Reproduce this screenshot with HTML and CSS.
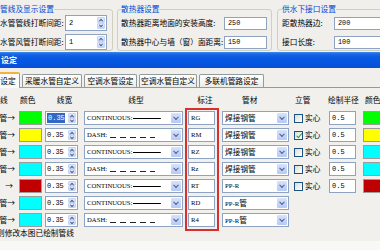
FILE: index.html
```html
<!DOCTYPE html>
<html>
<head>
<meta charset="utf-8">
<link rel="stylesheet" href="styles.css">
</head>
<body>
<div class="top">
  <fieldset class="grp g1">
    <legend>管线及显示设置</legend>
    <div class="frow"><span class="flbl w1">水管管线打断间距:</span><span class="spin big"><span class="val">2</span><span class="btns"><i class="up"></i><i class="dn"></i></span></span></div>
    <div class="frow"><span class="flbl w1">水管风管打断间距:</span><span class="spin big"><span class="val">1</span><span class="btns"><i class="up"></i><i class="dn"></i></span></span></div>
  </fieldset>
  <fieldset class="grp g2">
    <legend>散热器设置</legend>
    <div class="frow"><span class="flbl w2">散热器距离地面的安装高度:</span><span class="inp tinp">250</span></div>
    <div class="frow"><span class="flbl w2">散热器中心与墙（窗）面距离:</span><span class="inp tinp">150</span></div>
  </fieldset>
  <fieldset class="grp g3">
    <legend>供水下接口设置</legend>
    <div class="frow"><span class="flbl w3">距散热器边:</span><span class="inp tinp wide">200</span></div>
    <div class="frow"><span class="flbl w3">接口长度:</span><span class="inp tinp wide">100</span></div>
  </fieldset>
</div>
<div class="titlebar">设定</div>
<div class="dlg">
  <div class="tabs">
    <span class="tab sel">设定</span>
    <span class="tab t2">采暖水管自定义</span>
    <span class="tab t3">空调水管设定</span>
    <span class="tab t4">空调水管自定义</span>
    <span class="tab t5">多联机管路设定</span>
  </div>
  <div class="pane">
    <div class="rows">
      <div class="row hdr">
        <span class="h-lbl">线</span><span class="h-clr">颜色</span><span class="h-c">线宽</span><span class="h-c">线型</span><span class="h-c">标注</span><span class="h-mat">管材</span><span class="h-chk">立管</span><span class="h-rad">绘制半径</span><span class="h-clr2">颜色</span>
      </div>
      <div class="row">
        <span class="lbl">管→</span><span class="clr c-g"></span>
        <span class="spin"><span class="val"><b class="selt">0.35</b></span><span class="btns"><i class="up"></i><i class="dn"></i></span></span>
        <span class="combo lt"><span class="ctext">CONTINUOUS:</span><span class="line solid"></span><span class="dd"></span></span>
        <span class="inp ann">RG</span>
        <span class="combo mat"><span class="ctext">焊接钢管</span><span class="dd"></span></span>
        <span class="chk"><i class="box"></i>实心</span><span class="inp rad">0.5</span><span class="clr c-g"></span>
      </div>
      <div class="row">
        <span class="lbl">管→</span><span class="clr c-y"></span>
        <span class="spin"><span class="val">0.35</span><span class="btns"><i class="up"></i><i class="dn"></i></span></span>
        <span class="combo lt"><span class="ctext">DASH:</span><span class="line dash"></span><span class="dd"></span></span>
        <span class="inp ann">RM</span>
        <span class="combo mat"><span class="ctext">焊接钢管</span><span class="dd"></span></span>
        <span class="chk"><i class="box on"></i>实心</span><span class="inp rad">0.5</span><span class="clr c-y"></span>
      </div>
      <div class="row">
        <span class="lbl">管→</span><span class="clr c-c"></span>
        <span class="spin"><span class="val">0.35</span><span class="btns"><i class="up"></i><i class="dn"></i></span></span>
        <span class="combo lt"><span class="ctext">CONTINUOUS:</span><span class="line solid"></span><span class="dd"></span></span>
        <span class="inp ann">RZ</span>
        <span class="combo mat"><span class="ctext">焊接钢管</span><span class="dd"></span></span>
        <span class="chk"><i class="box"></i>实心</span><span class="inp rad">0.5</span><span class="clr c-c"></span>
      </div>
      <div class="row">
        <span class="lbl">管→</span><span class="clr c-c"></span>
        <span class="spin"><span class="val">0.35</span><span class="btns"><i class="up"></i><i class="dn"></i></span></span>
        <span class="combo lt"><span class="ctext">DASH:</span><span class="line dash"></span><span class="dd"></span></span>
        <span class="inp ann">Rz</span>
        <span class="combo mat"><span class="ctext">焊接钢管</span><span class="dd"></span></span>
        <span class="chk"><i class="box"></i>实心</span><span class="inp rad">0.5</span><span class="clr c-c"></span>
      </div>
      <div class="row">
        <span class="lbl short">→</span><span class="clr c-r"></span>
        <span class="spin"><span class="val">0.35</span><span class="btns"><i class="up"></i><i class="dn"></i></span></span>
        <span class="combo lt"><span class="ctext">CONTINUOUS:</span><span class="line solid"></span><span class="dd"></span></span>
        <span class="inp ann">RT</span>
        <span class="combo mat"><span class="ctext lat">PP-R</span><span class="dd"></span></span>
        <span class="chk"><i class="box"></i>实心</span><span class="inp rad">0.5</span><span class="clr c-r"></span>
      </div>
      <div class="row">
        <span class="lbl">管→</span><span class="clr c-c"></span>
        <span class="spin"><span class="val">0.35</span><span class="btns"><i class="up"></i><i class="dn"></i></span></span>
        <span class="combo lt"><span class="ctext">CONTINUOUS:</span><span class="line solid"></span><span class="dd"></span></span>
        <span class="inp ann">RD</span>
        <span class="combo mat"><span class="ctext"><span class="lat">PP-R</span>管</span><span class="dd"></span></span>
        <span></span><span></span><span></span>
      </div>
      <div class="row">
        <span class="lbl">管→</span><span class="clr c-c"></span>
        <span class="spin"><span class="val">0.35</span><span class="btns"><i class="up"></i><i class="dn"></i></span></span>
        <span class="combo lt"><span class="ctext">DASH:</span><span class="line dash"></span><span class="dd"></span></span>
        <span class="inp ann">R4</span>
        <span class="combo mat"><span class="ctext"><span class="lat">PP-R</span>管</span><span class="dd"></span></span>
        <span></span><span></span><span></span>
      </div>
    </div>
    <div class="foot">则修改本图已绘制管线</div>
    <div class="redbox"></div>
  </div>
</div>
</body>
</html>
```

FILE: styles.css
```css
* { box-sizing: border-box; margin: 0; padding: 0; }
html, body { width: 380px; height: 250px; overflow: hidden; }
body {
  background: #f8f8f6;
  font-family: "Noto Sans CJK SC", sans-serif;
  font-size: 7.7px;
  line-height: 10px;
  color: #000;
}

/* ---------- top group boxes ---------- */
.top {
  display: flex;
  align-items: flex-start;
  height: 52px;
  padding-top: 4px;
  background: #f0efeb;
  overflow: hidden;
}
.grp {
  flex: none;
  height: 47px;
  border: 1px solid #d0d0bf;
  border-radius: 3px;
  padding-top: 1px;
  min-width: 0;
}
.grp legend {
  color: #0046d5;
  padding: 0;
  height: 10px;
  line-height: 10px;
}
.g1 { width: 120px; margin-left: -7px; padding-left: 6px; padding-right: 5px; }
.g2 { width: 155px; margin-left: 4px; padding-left: 3px; padding-right: 4px; }
.g3 { width: 120px; margin-left: 5px; padding-left: 4px; }

.frow { display: flex; align-items: center; height: 16px; }
.frow + .frow { margin-top: 3px; }
.flbl { flex: none; white-space: nowrap; }
.w1 { width: 65px; }
.w2 { width: 103px; }
.w3 { width: 52px; }

.inp {
  display: flex;
  align-items: center;
  background: #fff;
  border: 1px solid #8ea3c1;
  padding-left: 2px;
  font-family: "Liberation Mono", monospace;
  font-size: 6.8px;
  white-space: nowrap;
  overflow: hidden;
}
.tinp { width: 43px; height: 13px; padding-left: 3px; }
.tinp.wide { width: 50px; }

/* spinner */
.spin {
  display: flex;
  width: 33px;
  height: 14px;
  background: #fff;
  border: 1px solid #8ea3c1;
}
.spin.big { width: 42px; height: 16px; }
.val {
  flex: 1;
  display: flex;
  align-items: center;
  padding-left: 1px;
  font-family: "Liberation Mono", monospace;
  font-size: 7px;
  white-space: nowrap;
}
.spin.big .val { padding-left: 3px; }
.selt { font-weight: normal; background: #316ac5; color: #fff; padding: 0 0 0 1px; line-height: 10px; }
.btns {
  width: 8px;
  display: flex;
  flex-direction: column;
  margin: 1px 1px 1px 0;
}
.btns i {
  flex: 1;
  position: relative;
  background: linear-gradient(#e3ebfd, #c1d2f8);
  border: 1px solid #c6d5f5;
  border-radius: 1px;
}
.btns i::after {
  content: "";
  position: absolute;
  left: 50%;
  top: 50%;
  width: 2px;
  height: 2px;
  border-left: 1px solid #4d6185;
  border-top: 1px solid #4d6185;
  transform: translate(-50%, -20%) rotate(45deg);
}
.btns i.dn::after { transform: translate(-50%, -80%) rotate(225deg); }

/* ---------- title bar ---------- */
.titlebar {
  height: 16px;
  background: linear-gradient(#3f8cf3 0, #1a67e6 2px, #0a5ae2 5px, #0455e0 70%, #0b4fd4 100%);
  color: #fff;
  font-weight: bold;
  font-size: 8px;
  line-height: 16px;
  padding-left: 1px;
}

/* ---------- dialog / tabs ---------- */
.dlg { background: #f0efeb; padding-top: 4px; }
.tabs {
  display: flex;
  align-items: flex-end;
  height: 15px;
  margin-left: -4px;
  position: relative;
  z-index: 1;
}
.tab {
  flex: none;
  height: 13px;
  margin-left: 2px;
  border: 1px solid #919b9c;
  border-bottom: none;
  border-radius: 2px 2px 0 0;
  background: linear-gradient(#ffffff, #ecebe5);
  text-align: center;
  line-height: 12px;
  white-space: nowrap;
}
.tab.sel {
  width: 24px;
  height: 16px;
  margin-left: 0;
  margin-bottom: -1px;
  border-top: 2px solid #f5b140;
  background: #fbfbf9;
  line-height: 13px;
}
.t2 { width: 60px; }
.t3 { width: 53px; }
.t4 { width: 58px; }
.t5 { width: 65px; }

.pane {
  position: relative;
  height: 154px;
  border-top: 1px solid #919b9c;
  background: #f1f0ec;
  padding-top: 6px;
}

.rows { display: flex; flex-direction: column; gap: 3px; }
.row {
  display: grid;
  grid-template-columns: 19px 26px 39px 104px 34px 72px 35px 34px 30px;
  height: 14px;
}
.row.hdr { line-height: 12px; }
.h-lbl { padding-left: 0; white-space: nowrap; }
.h-clr { padding-left: 1px; }
.h-c { justify-self: center; white-space: nowrap; }
.h-mat { padding-left: 20px; }
.h-chk { padding-left: 1px; }
.h-rad { margin-left: -1px; white-space: nowrap; }
.h-clr2 { padding-left: 2px; white-space: nowrap; }

.lbl { display: flex; justify-content: flex-end; align-items: center; padding-right: 4px; white-space: nowrap; }
.lbl.short { padding-right: 6px; }

.clr { width: 23px; height: 14px; border: 1px solid #9c9c9c; }
.c-g { background: #00ff00; }
.c-y { background: #ffff00; }
.c-c { background: #00ffff; }
.c-r { background: #c00000; }

.combo {
  display: flex;
  align-items: center;
  height: 14px;
  background: #fff;
  border: 1px solid #8ea3c1;
  padding-left: 2px;
  white-space: nowrap;
  overflow: hidden;
}
.combo.lt { width: 99px; }
.combo.mat { width: 67px; }
.ctext { flex: none; }
.combo.lt .ctext, .lat {
  font-family: "Liberation Serif", serif;
  font-size: 6.7px;
}
.line { flex: 1; align-self: stretch; }
.line.solid { margin: 0 10px 0 1px; background: linear-gradient(#000, #000) center / 100% 1px no-repeat; }
.line.dash {
  margin: 0 16px 0 3px;
  background: repeating-linear-gradient(to right, #222 0 6px, transparent 6px 10px) left bottom 3px / 100% 1px no-repeat;
}
.dd {
  flex: none;
  position: relative;
  width: 10px;
  align-self: stretch;
  margin: 1px 1px 1px auto;
  background: linear-gradient(#d6e2fd, #b6c9f6);
  border-radius: 1px;
}
.dd::after {
  content: "";
  position: absolute;
  left: 50%;
  top: 50%;
  width: 3px;
  height: 3px;
  border-right: 1.5px solid #4d6185;
  border-bottom: 1.5px solid #4d6185;
  transform: translate(-50%, -70%) rotate(45deg);
}

.ann {
  width: 27px;
  height: 14px;
  font-family: "Liberation Serif", serif;
  font-size: 6.7px;
  padding-left: 2px;
}
.rad { width: 27px; height: 14px; font-size: 7px; }

.chk { display: flex; align-items: center; white-space: nowrap; }
.box {
  position: relative;
  width: 9px;
  height: 9px;
  margin-right: 2px;
  border: 1px solid #1c5180;
  background: linear-gradient(135deg, #dcdcd6, #ffffff);
}
.box.on::after {
  content: "";
  position: absolute;
  left: 2.5px;
  top: 0;
  width: 2px;
  height: 4.5px;
  border-right: 1.5px solid #21a121;
  border-bottom: 1.5px solid #21a121;
  transform: rotate(40deg);
}

.foot { margin-top: 1px; margin-left: -3px; white-space: nowrap; }

.redbox {
  position: absolute;
  left: 185px;
  top: 20px;
  width: 34px;
  height: 123px;
  border: 2px solid #d8302f;
}
```
